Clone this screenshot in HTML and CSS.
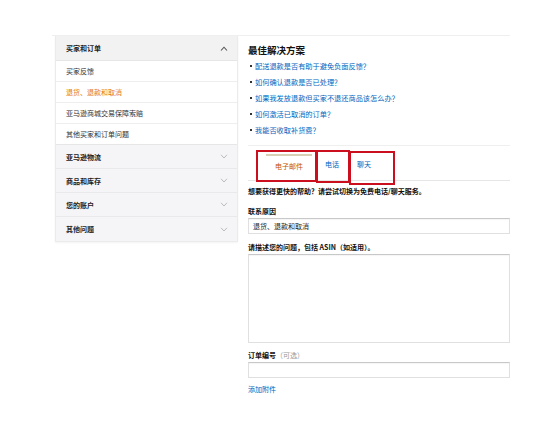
FILE: index.html
```html
<!DOCTYPE html>
<html lang="zh-CN">
<head>
<meta charset="utf-8">
<link rel="stylesheet" href="styles.css">
</head>
<body>
<div class="page">
  <aside class="sidebar">
    <div class="sec open">
      <span>买家和订单</span>
      <svg class="chev" viewBox="0 0 8 5" width="8" height="5"><path d="M1 4.5 L4 1.2 L7 4.5" fill="none" stroke="#555" stroke-width="1.1"/></svg>
    </div>
    <div class="sub">买家反馈</div>
    <div class="sub active">退货、退款和取消</div>
    <div class="sub">亚马逊商城交易保障索赔</div>
    <div class="sub last">其他买家和订单问题</div>
    <div class="sec"><span>亚马逊物流</span><svg class="chev" viewBox="0 0 8 5" width="8" height="5"><path d="M1 0.8 L4 4 L7 0.8" fill="none" stroke="#bbb" stroke-width="1"/></svg></div>
    <div class="sec"><span>商品和库存</span><svg class="chev" viewBox="0 0 8 5" width="8" height="5"><path d="M1 0.8 L4 4 L7 0.8" fill="none" stroke="#bbb" stroke-width="1"/></svg></div>
    <div class="sec"><span>您的账户</span><svg class="chev" viewBox="0 0 8 5" width="8" height="5"><path d="M1 0.8 L4 4 L7 0.8" fill="none" stroke="#bbb" stroke-width="1"/></svg></div>
    <div class="sec"><span>其他问题</span><svg class="chev" viewBox="0 0 8 5" width="8" height="5"><path d="M1 0.8 L4 4 L7 0.8" fill="none" stroke="#bbb" stroke-width="1"/></svg></div>
  </aside>
  <main class="main">
    <h1 class="title">最佳解决方案</h1>
    <ul class="links">
      <li><a>配送退款是否有助于避免负面反馈？</a></li>
      <li><a>如何确认退款是否已处理？</a></li>
      <li><a>如果我发放退款但买家不退还商品该怎么办？</a></li>
      <li><a>如何激活已取消的订单？</a></li>
      <li><a>我能否收取补货费？</a></li>
    </ul>
    <div class="tabs">
      <div class="tab active">电子邮件</div>
      <div class="tab">电话</div>
      <div class="tab">聊天</div>
      <div class="mark m1"></div>
      <div class="mark m2"></div>
      <div class="mark m3"></div>
    </div>
    <p class="hint">想要获得更快的帮助？请尝试切换为免费电话/聊天服务。</p>
    <label class="lbl">联系原因</label>
    <div class="field select">退货、退款和取消</div>
    <label class="lbl l2">请描述您的问题，包括 ASIN（如适用）。</label>
    <div class="field area"></div>
    <label class="lbl l3">订单编号<span class="opt">（可选）</span></label>
    <div class="field input"></div>
    <a class="attach">添加附件</a>
  </main>
</div>
</body>
</html>
```

FILE: styles.css
```css
* { box-sizing: border-box; }
html, body { margin: 0; padding: 0; background: #fff; }
body {
  font-family: "Noto Sans CJK SC", "Noto Sans", sans-serif;
  font-size: 7px;
  color: #111;
  width: 546px;
  height: 435px;
  overflow: hidden;
}
.page {
  display: flex;
  margin: 35px 0 0 52px;
  width: 458px;
  border-top: 1px solid #efefef;
}
.sidebar {
  width: 183px;
  margin: 0 0 0 3px;
  border: 1px solid #ebebeb;
  border-top: none;
  background: #fff;
  box-shadow: 0 1px 2px rgba(0,0,0,0.05);
  align-self: flex-start;
}
.sec {
  display: flex;
  align-items: center;
  justify-content: space-between;
  height: 24px;
  padding: 0 9px 0 10px;
  background: #f5f4f6;
  font-weight: bold;
  border-bottom: 1px solid #e9e8ea;
  color: #222;
}
.sec:last-child { border-bottom: none; }
.sec.open { background: #f2f2f2; height: 25px; border-bottom: 1px solid #e6e6e6; }
.chev { display: block; }
.sub {
  height: 21px;
  line-height: 21px;
  padding-left: 10px;
  border-bottom: 1px solid #eeeeee;
  color: #333;
}
.sub.last { border-bottom: 1px solid #e6e6e6; }
.sub.active { color: #e47911; }
.main {
  flex: 1;
  margin-left: 10px;
  padding-top: 7px;
  position: relative;
}
.title {
  margin: 0;
  font-size: 9.5px;
  font-weight: bold;
  line-height: 14px;
  color: #111;
}
.links {
  list-style: none;
  margin: 1px 0 0;
  padding: 0 0 7px;
  border-bottom: 1px solid #efefef;
}
.links li {
  height: 16px;
  line-height: 16px;
  padding-left: 7px;
  position: relative;
  font-size: 7.2px;
}
.links li::before {
  content: "";
  position: absolute;
  left: 2px;
  top: 7px;
  width: 2px;
  height: 2px;
  background: #333;
}
.links a { color: #0066c0; }
.tabs {
  position: relative;
  display: flex;
  height: 31px;
  margin-top: 4px;
  padding-left: 18px;
  border-bottom: 1px solid #e6e6e6;
}
.tab {
  height: 26px;
  margin-top: 4px;
  line-height: 20px;
  padding: 0 10px;
  color: #0066c0;
}
.tab.active {
  width: 46px;
  padding: 0;
  text-align: center;
  color: #c45500;
  border-top: 2px solid #d9cfb4;
  margin-right: 4px;
}
.tab:nth-child(2) { padding: 0 8px 0 9px; }
.mark {
  position: absolute;
  border: 2px solid #cc0f1f;
  pointer-events: none;
}
.m1 { left: 8px; top: 0; width: 61px; height: 32px; }
.m2 { left: 68px; top: 0; width: 34px; height: 33px; }
.m3 { left: 101px; top: 1px; width: 46px; height: 34px; }
.hint {
  margin: 5px 0 0;
  line-height: 11px;
  font-weight: bold;
  color: #111;
}
.lbl {
  display: block;
  margin-top: 9px;
  line-height: 11px;
  color: #111;
  font-weight: bold;
}
.l2 { margin-top: 8px; }
.l3 { margin-top: 7px; }
.opt { font-weight: normal; color: #999; }
.field {
  border: 1px solid #e0e0e0;
  border-top-color: #c8c8c8;
  background: #fff;
  box-shadow: inset 0 1px 1px rgba(0,0,0,0.04);
}
.select {
  margin-top: 1px;
  height: 16px;
  line-height: 14px;
  padding-left: 4px;
  color: #222;
}
.area { margin-top: 1px; height: 89px; }
.input { margin-top: 1px; height: 16px; }
.attach {
  display: block;
  margin-top: 6px;
  line-height: 11px;
  color: #0066c0;
}
```
